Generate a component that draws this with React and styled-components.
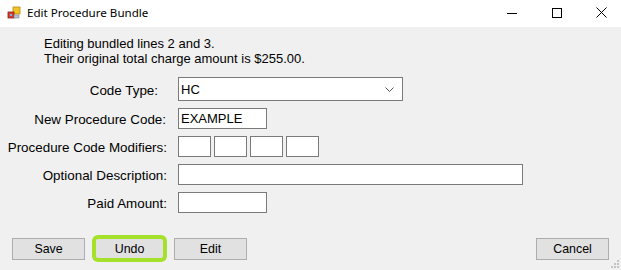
import React from "react";
import styled, { createGlobalStyle } from "styled-components";

const Global = createGlobalStyle`
  html, body { margin: 0; padding: 0; background: #f0f0f0; }
  body { width: 621px; height: 270px; overflow: hidden; }
  * { box-sizing: border-box; }
`;

const Window = styled.div`
  position: relative;
  width: 621px;
  height: 270px;
  background: #f0f0f0;
  display: flex;
  flex-direction: column;
  font-family: "Liberation Sans", Arial, sans-serif;
  font-size: 13px;
  color: #000;
  overflow: hidden;
`;

const TitleBar = styled.div`
  height: 27px;
  background: #fff;
  display: flex;
  align-items: center;
  flex: none;
`;

const AppIcon = styled.svg`
  width: 14px;
  height: 14px;
  margin: 0 6px 1px 7px;
  flex: none;
`;

const Title = styled.div`
  font-family: "Noto Sans", "Segoe UI", sans-serif;
  font-size: 11.6px;
  flex: 1;
  padding-bottom: 2px;
`;

const Caption = styled.div`
  display: flex;
  margin-right: -3px;
  height: 100%;
`;

const CaptionButton = styled.div`
  width: 45px;
  height: 100%;
  display: flex;
  align-items: center;
  justify-content: center;
  padding-bottom: 2px;
`;

const Body = styled.div`
  flex: 1;
  display: flex;
  flex-direction: column;
  padding-top: 9px;
`;

const Intro = styled.div`
  padding-left: 44px;
  line-height: 15px;
`;

const Form = styled.div`
  margin-top: 11px;
  display: grid;
  grid-template-columns: 167px 1fr;
  column-gap: 11px;
  row-gap: 7px;
  align-items: center;
`;

const Label = styled.div`
  text-align: right;
  font-size: 13.4px;
  padding-right: ${(p) => p.$inset || 0}px;
  white-space: nowrap;
  line-height: 15px;
  padding-top: 2px;
`;

const Field = styled.div`
  width: ${(p) => p.$w}px;
  height: ${(p) => p.$h || 21}px;
  background: #fff;
  border: 1px solid #7a7a7a;
  display: flex;
  align-items: center;
  padding-left: 2px;
  line-height: 15px;
`;

const Combo = styled(Field)`
  justify-content: space-between;
  padding-right: 8px;
`;

const ModRow = styled.div`
  display: flex;
  gap: 3px;
`;

const Footer = styled.div`
  margin-top: 25px;
  padding: 0 12px;
  display: flex;
  gap: 8px;
`;

const Button = styled.div`
  position: relative;
  width: 73px;
  height: 22px;
  background: #e1e1e1;
  border: 1px solid #adadad;
  display: flex;
  align-items: center;
  justify-content: center;
  font-size: 12.4px;
  ${(p) => (p.$push ? "margin-left: auto;" : "")}
  ${(p) =>
    p.$highlight
      ? `&::after {
    content: "";
    position: absolute;
    top: -4px; bottom: -3px; left: -2px; right: -2px;
    border: 4px solid #a5e12a;
    border-radius: 6px;
  }`
      : ""}
`;

const Grip = styled.svg`
  position: absolute;
  right: 1px;
  bottom: 1px;
  width: 12px;
  height: 12px;
`;

export default function App() {
  return (
    <Window>
      <Global />
      <TitleBar>
        <AppIcon viewBox="0 0 14 14">
          <rect x="6" y="1" width="7" height="7" fill="#f2c423" stroke="#b38a12" strokeWidth="0.8" />
          <rect x="1" y="6" width="6" height="6" fill="#d73a2f" stroke="#8c1f18" strokeWidth="0.8" />
          <rect x="3" y="8" width="2" height="2" fill="#7ab0e0" />
          <rect x="7" y="9" width="5" height="3" fill="#b9c3cf" stroke="#7d8894" strokeWidth="0.6" />
        </AppIcon>
        <Title>Edit Procedure Bundle</Title>
        <Caption>
          <CaptionButton>
            <svg width="10" height="10" viewBox="0 0 10 10">
              <line x1="0" y1="5.5" x2="10" y2="5.5" stroke="#000" strokeWidth="1" />
            </svg>
          </CaptionButton>
          <CaptionButton>
            <svg width="10" height="10" viewBox="0 0 10 10">
              <rect x="0.5" y="0.5" width="9" height="9" fill="none" stroke="#000" strokeWidth="1" />
            </svg>
          </CaptionButton>
          <CaptionButton>
            <svg width="11" height="11" viewBox="0 0 11 11">
              <path d="M0.5 0.5 L10.5 10.5 M10.5 0.5 L0.5 10.5" stroke="#000" strokeWidth="1" />
            </svg>
          </CaptionButton>
        </Caption>
      </TitleBar>
      <Body>
        <Intro>
          <div>Editing bundled lines 2 and 3.</div>
          <div>Their original total charge amount is $255.00.</div>
        </Intro>
        <Form>
          <Label $inset={9}>Code Type:</Label>
          <Combo $w={225} $h={24}>
            <span>HC</span>
            <svg width="9" height="5" viewBox="0 0 9 5">
              <path d="M0.5 0.5 L4.5 4.5 L8.5 0.5" fill="none" stroke="#555" strokeWidth="1" />
            </svg>
          </Combo>
          <Label $inset={1}>New Procedure Code:</Label>
          <Field $w={89}>EXAMPLE</Field>
          <Label>Procedure Code Modifiers:</Label>
          <ModRow>
            <Field $w={33} />
            <Field $w={33} />
            <Field $w={33} />
            <Field $w={33} />
          </ModRow>
          <Label>Optional Description:</Label>
          <Field $w={345} />
          <Label>Paid Amount:</Label>
          <Field $w={89} />
        </Form>
        <Footer>
          <Button>Save</Button>
          <Button $highlight>Undo</Button>
          <Button>Edit</Button>
          <Button $push>Cancel</Button>
        </Footer>
      </Body>
      <Grip viewBox="0 0 12 12">
        <g fill="#c4c4c4">
          <rect x="9" y="3" width="2" height="2" />
          <rect x="6" y="6" width="2" height="2" />
          <rect x="9" y="6" width="2" height="2" />
          <rect x="3" y="9" width="2" height="2" />
          <rect x="6" y="9" width="2" height="2" />
          <rect x="9" y="9" width="2" height="2" />
        </g>
      </Grip>
    </Window>
  );
}
